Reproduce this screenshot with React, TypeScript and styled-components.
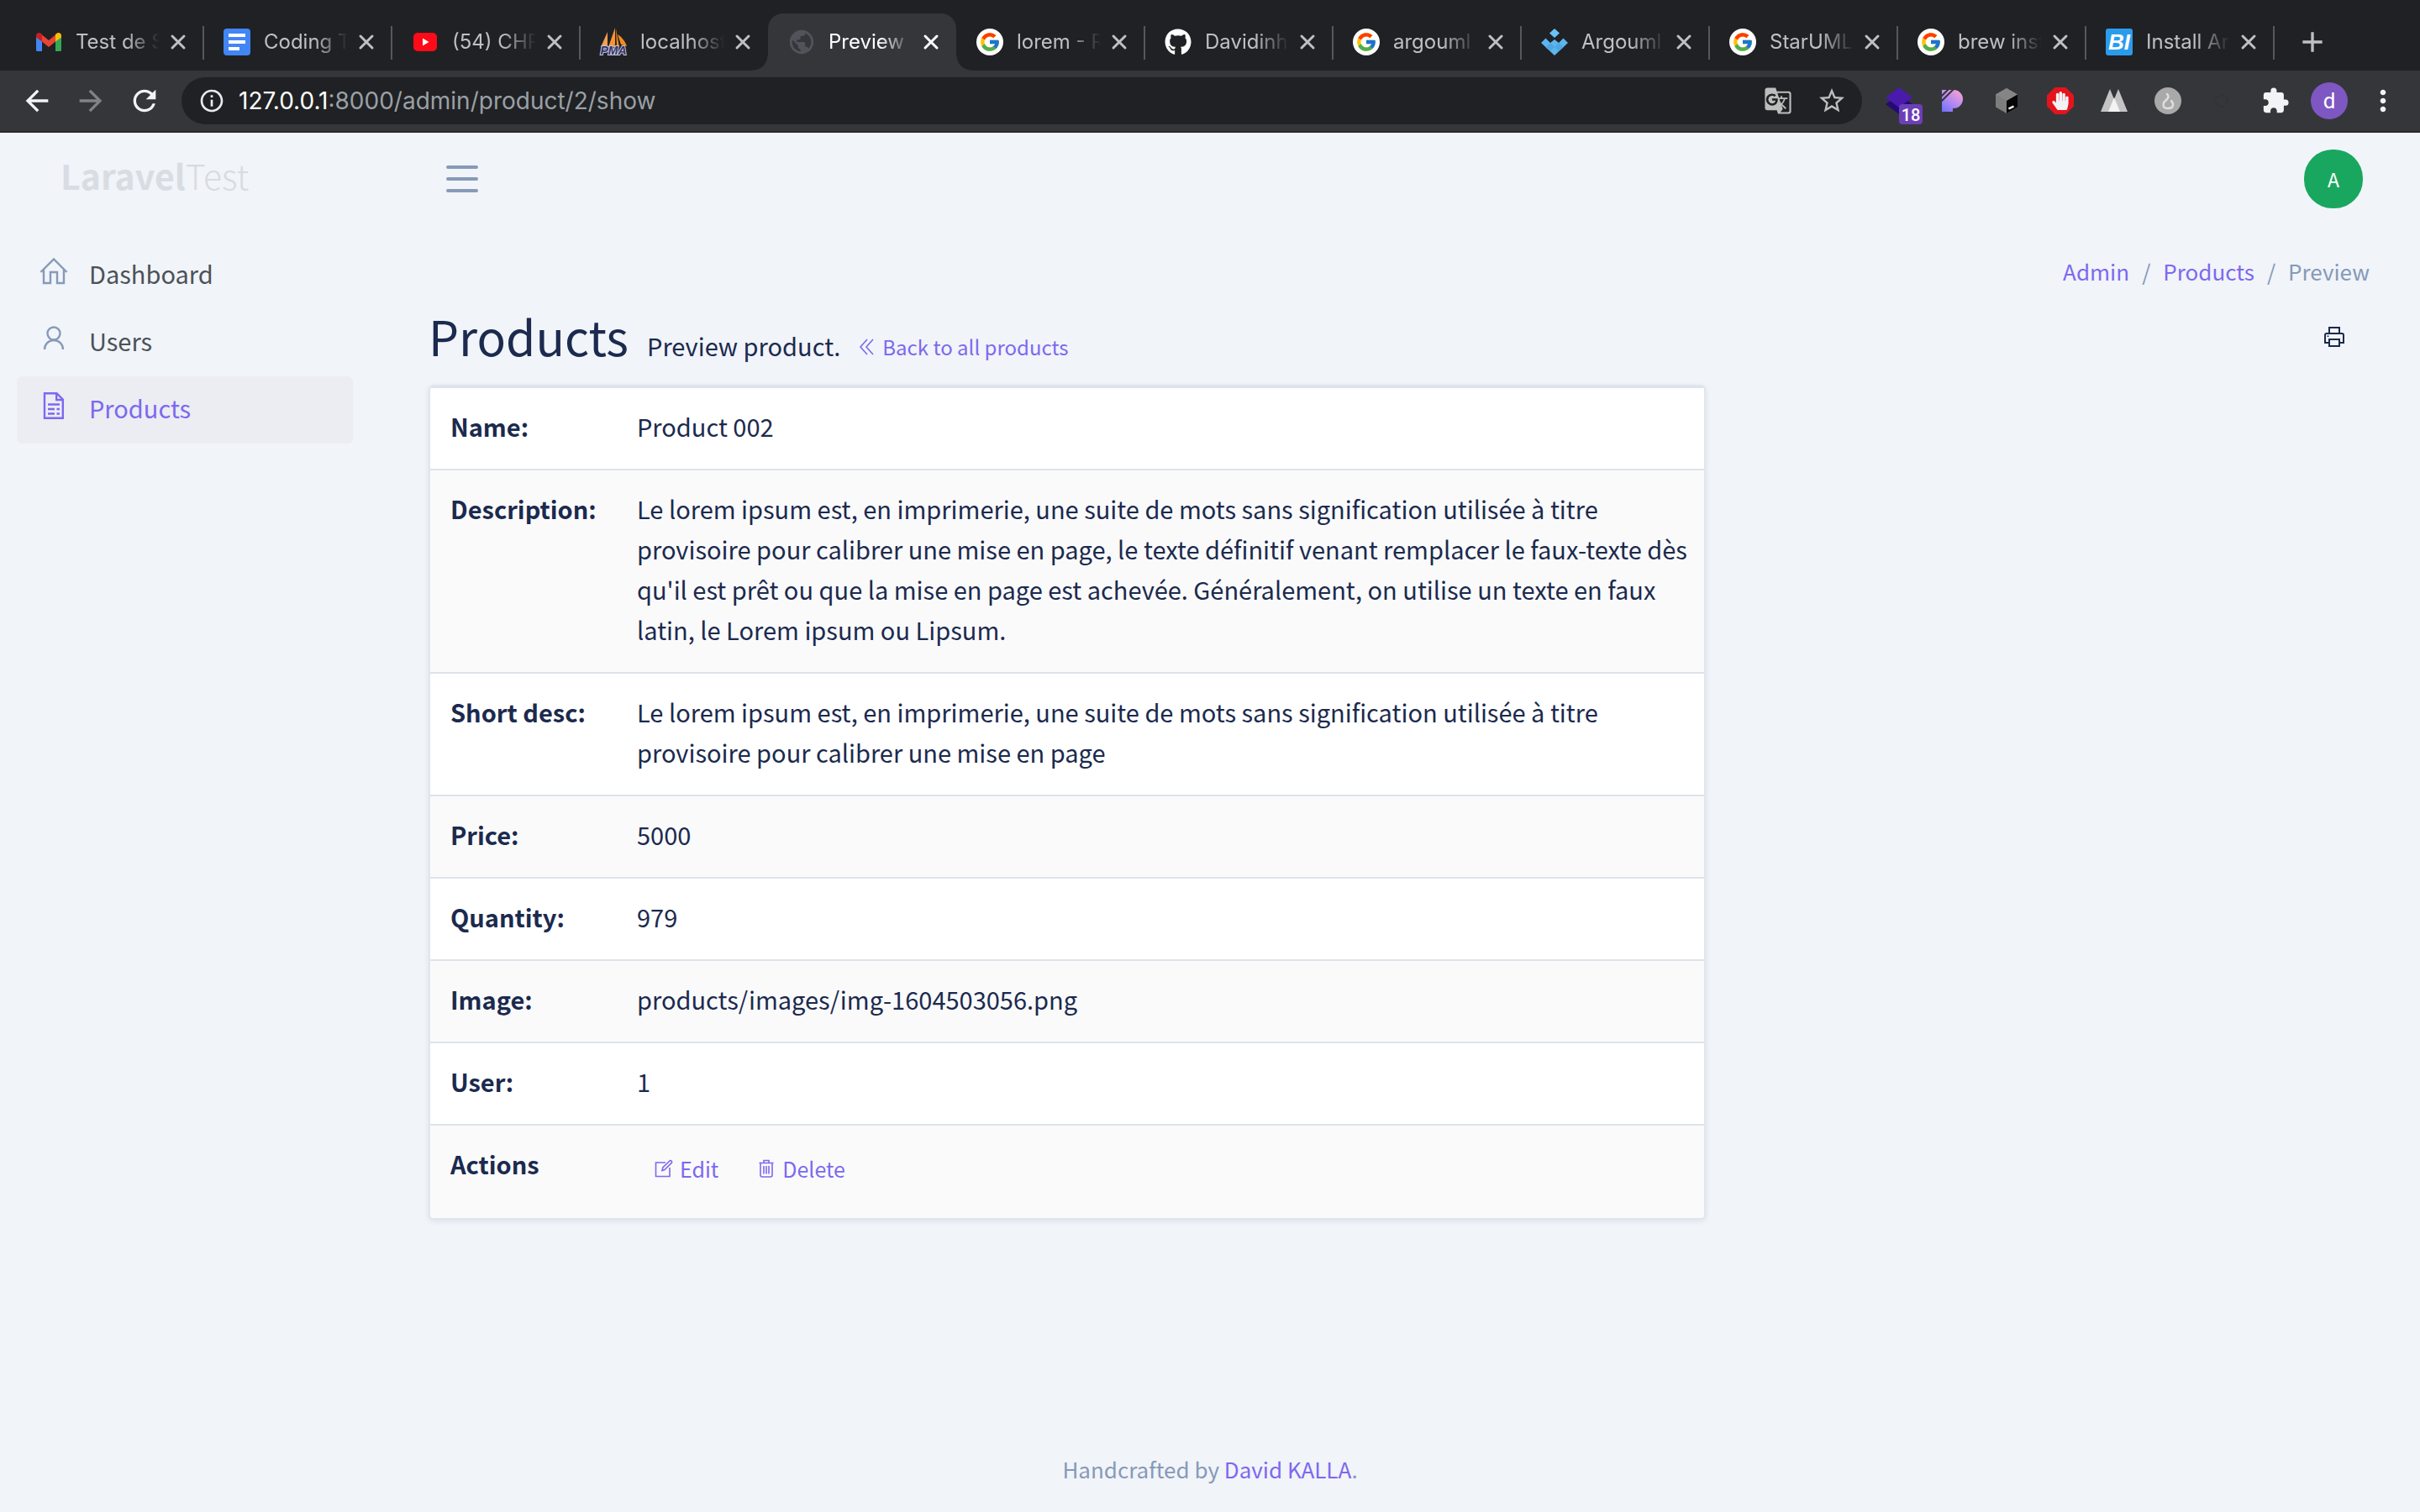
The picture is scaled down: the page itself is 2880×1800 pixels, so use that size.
import React from "react";
import styled, { createGlobalStyle } from "styled-components";
import {
  MdAdd,
  MdArrowBack,
  MdArrowForward,
  MdExtension,
  MdGTranslate,
  MdInfoOutline,
  MdMoreVert,
  MdPublic,
  MdRefresh,
  MdStarOutline,
} from "react-icons/md";
import { FcGoogle } from "react-icons/fc";
import { FaGithub, FaHandPaper } from "react-icons/fa";

const color = {
  page: "#f1f4f9",
  ink: "#1b2a4e",
  primary: "#7c69ef",
  muted: "#869ab8",
  line: "#dde2eb",
  strip: "#202124",
  toolbar: "#35363a",
};

const GlobalStyle = createGlobalStyle`
  *, *::before, *::after { box-sizing: border-box; }
  body {
    margin: 0;
    background: ${color.page};
    color: ${color.ink};
    font-family: "Noto Sans CJK SC", "Open Sans", sans-serif;
    font-size: 29px;
    line-height: 48px;
  }
  a { color: ${color.primary}; text-decoration: none; }
  button { border: 0; background: none; padding: 0; font: inherit; color: inherit; cursor: pointer; }
  svg { display: block; flex: none; }
`;

const Screen = styled.div`
  display: flex;
  flex-direction: column;
  min-height: 100vh;
`;

/* Browser chrome */

const Chrome = styled.header`
  font-family: Inter, "Liberation Sans", sans-serif;
  background: ${color.strip};
`;

const TabStrip = styled.nav`
  display: flex;
  padding: 16px 18px 0;
`;

const Tab = styled.div<{ $active?: boolean; $divided?: boolean }>`
  position: relative;
  display: flex;
  align-items: center;
  flex: 0 1 224px;
  min-width: 0;
  height: 68px;
  padding: 0 20px 0 23px;
  color: ${(p) => (p.$active ? "#ffffff" : "#bdc1c6")};
  background: ${(p) => (p.$active ? color.toolbar : "transparent")};
  border-radius: 18px 18px 0 0;

  &::before,
  &::after {
    content: "";
    position: absolute;
    display: ${(p) => (p.$active || p.$divided ? "block" : "none")};
  }
  &::before {
    display: ${(p) => (p.$active ? "block" : "none")};
    left: -18px;
    bottom: 0;
    width: 18px;
    height: 18px;
    background: radial-gradient(circle at 0 0, transparent 17px, ${color.toolbar} 18px);
  }
  &::after {
    right: ${(p) => (p.$active ? "-18px" : "-1px")};
    bottom: ${(p) => (p.$active ? "0" : "13px")};
    width: ${(p) => (p.$active ? "18px" : "2px")};
    height: ${(p) => (p.$active ? "18px" : "40px")};
    background: ${(p) =>
      p.$active ? `radial-gradient(circle at 100% 0, transparent 17px, ${color.toolbar} 18px)` : "#56585c"};
  }
`;

const TabIcon = styled.span`
  display: flex;
  align-items: center;
  justify-content: center;
  flex: none;
  width: 34px;
  height: 34px;
`;

const TabTitle = styled.span`
  flex: 1;
  min-width: 0;
  margin: 0 12px 0 15px;
  overflow: hidden;
  white-space: nowrap;
  font-size: 24px;
  line-height: 32px;
  mask-image: linear-gradient(90deg, #000 60px, transparent 100px);
`;

const NewTab = styled.button`
  display: flex;
  align-items: center;
  justify-content: center;
  width: 92px;
  height: 68px;
  color: #bdc1c6;
`;

const Toolbar = styled.div`
  display: flex;
  align-items: center;
  height: 74px;
  padding: 0 12px;
  background: ${color.toolbar};
  border-bottom: 2px solid #27282b;
`;

const ToolButton = styled.button<{ $dim?: boolean }>`
  position: relative;
  display: flex;
  align-items: center;
  justify-content: center;
  flex: none;
  width: 64px;
  height: 56px;
  color: ${(p) => (p.$dim ? "#808285" : "#f1f3f4")};
`;

const Omnibox = styled.div`
  display: flex;
  align-items: center;
  flex: 1;
  min-width: 0;
  height: 56px;
  margin: 0 12px;
  padding: 0 4px 0 20px;
  border-radius: 28px;
  background: ${color.strip};
  color: #e8eaed;
`;

const Address = styled.div`
  flex: 1;
  min-width: 0;
  padding-left: 16px;
  font-size: 28px;
  line-height: 40px;
  color: #9aa0a6;
  white-space: nowrap;
  outline: none;

  b {
    font-weight: 400;
    color: #ffffff;
  }
`;

const OmniButton = styled(ToolButton)`
  color: #bdbdbd;
`;

const GoogleDisc = styled.span`
  display: flex;
  align-items: center;
  justify-content: center;
  width: 32px;
  height: 32px;
  border-radius: 50%;
  background: #ffffff;
`;

const Badge = styled.span`
  position: absolute;
  left: 32px;
  top: 32px;
  width: 28px;
  height: 24px;
  border-radius: 4px;
  background: #6c3fb8;
  color: #ffffff;
  font-family: Roboto, sans-serif;
  font-size: 20px;
  font-weight: 500;
  line-height: 27px;
  text-align: center;
`;

const ProfileDisc = styled.span`
  width: 44px;
  height: 44px;
  border-radius: 50%;
  background: #7e57c2;
  color: #ffffff;
  font-family: Roboto, sans-serif;
  font-size: 26px;
  line-height: 44px;
`;

/* Admin application */

const AppHeader = styled.header`
  display: grid;
  grid-template-columns: 530px 1fr auto;
  align-items: center;
  height: 110px;
  padding-right: 68px;
`;

const Brand = styled.a`
  padding: 0 0 10px 72px;
  font-size: 41px;
  line-height: 60px;
  font-weight: 300;
  color: #d7dbe1;

  b {
    font-weight: 700;
    color: #d9dde3;
  }
`;

const MenuToggle = styled.button`
  justify-self: start;
  color: ${color.muted};
`;

const Avatar = styled.button`
  width: 70px;
  height: 70px;
  border-radius: 34px;
  background: #19a75f;
  color: #ffffff;
  font-size: 23px;
  line-height: 68px;
`;

const AppBody = styled.div`
  display: flex;
  flex: 1;
`;

const Sidebar = styled.nav`
  flex: none;
  width: 480px;
  padding: 20px 60px 0 20px;
`;

const MenuItem = styled.a<{ $active?: boolean }>`
  display: flex;
  align-items: flex-start;
  gap: 24px;
  padding: 13px 26px 19px;
  border-radius: 6px;
  background: ${(p) => (p.$active ? "#ebedf3" : "transparent")};
  color: ${(p) => (p.$active ? color.primary : "#4b5258")};

  svg {
    margin-top: 3px;
    color: ${(p) => (p.$active ? color.primary : color.muted)};
  }
`;

const Main = styled.main`
  flex: 1;
  min-width: 0;
  padding: 35px 60px 0 30px;
`;

const Breadcrumb = styled.ol`
  display: flex;
  justify-content: flex-end;
  margin: 0;
  padding: 0;
  list-style: none;
  font-size: 26px;
  line-height: 40px;
  color: ${color.muted};

  li + li::before {
    content: "/";
    padding: 0 15px;
  }
`;

const TitleRow = styled.div`
  display: flex;
  align-items: flex-end;
  justify-content: space-between;
  padding: 16px 0 19px;
`;

const Heading = styled.div`
  display: flex;
  align-items: baseline;
  gap: 22px;
`;

const Title = styled.h1`
  margin: 0;
  font-size: 57px;
  line-height: 80px;
  font-weight: 400;
`;

const IconLink = styled.a`
  display: inline-flex;
  align-items: center;
  gap: 10px;
  font-size: 24px;
  line-height: 36px;
`;

const PrintButton = styled.button`
  padding: 22px 30px 26px;
`;

const Columns = styled.div`
  display: grid;
  grid-template-columns: 2fr 1fr;
  gap: 30px;
`;

const Card = styled.section`
  overflow: hidden;
  border: 2px solid #e1e6ee;
  border-radius: 6px;
  background: #ffffff;
  box-shadow: 0 2px 6px rgba(20, 40, 80, 0.09);
`;

const Details = styled.table`
  width: 100%;
  border-collapse: separate;
  border-spacing: 0;

  th,
  td {
    padding: 21px 16px 27px 24px;
    border-top: 2px solid ${color.line};
    vertical-align: top;
    text-align: left;
  }
  th {
    width: 222px;
    font-weight: 700;
  }
  td {
    padding-right: 12px;
  }
  tr:nth-child(even) {
    background: #fafafb;
  }
`;

const Actions = styled.div`
  display: flex;
  gap: 4px;
`;

const ActionLink = styled(IconLink)`
  padding: 12px 21px 14px;
  gap: 8px;
  font-size: 25px;
`;

const Footer = styled.footer`
  padding: 24px 0 31px;
  text-align: center;
  font-size: 26px;
  line-height: 40px;
  color: ${color.muted};
`;

/* Icons */

const Google = () => (
  <GoogleDisc>
    <FcGoogle size={26} />
  </GoogleDisc>
);

const Gmail = () => (
  <svg width="32" height="32" viewBox="0 0 32 32">
    <path d="M1 8v17.500q0 1.500 1.500 1.500H8V14.500z" fill="#4285f4" />
    <path d="M31 8v17.500q0 1.500-1.500 1.500H24V14.500z" fill="#34a853" />
    <path d="M8 7.500v8L16 22l8-6.500v-8L16 14z" fill="#ea4335" />
    <path d="M1 8.500C1 5 4.500 4 7 6l1 1v8.500l-7-5z" fill="#c5221f" />
    <path d="M31 8.500C31 5 27.500 4 25 6l-1 1v8.500l7-5z" fill="#fbbc04" />
  </svg>
);

const Docs = () => (
  <svg width="32" height="32" viewBox="0 0 32 32">
    <rect width="32" height="32" rx="4" fill="#4285f4" />
    <path d="M6 6h20v4H6zM6 14h20v4H6zM6 22h13v4H6z" fill="#fff" />
  </svg>
);

const Youtube = () => (
  <svg width="30" height="24" viewBox="0 0 30 24">
    <rect x="1" y="1" width="28" height="22" rx="5" fill="#ff0a18" />
    <path d="M12 7.500v9l7.500-4.500z" fill="#fff" />
  </svg>
);

const PhpMyAdmin = () => (
  <svg width="34" height="34" viewBox="0 0 34 34">
    <path d="M10 5 2 23h8z" fill="#f6a04c" />
    <path d="M19 0 11 23h8z" fill="#f79433" />
    <path d="M20 1l4 22h-3zM22 8c5 3 9 8 11 14l-7-2z" fill="#f58a1f" />
    <text
      x="17"
      y="32"
      textAnchor="middle"
      fontFamily="Liberation Sans, sans-serif"
      fontWeight="700"
      fontStyle="italic"
      fontSize="14"
      fill="#34346c"
      stroke="#c9c9dc"
      strokeWidth="2"
      paintOrder="stroke"
    >
      PMA
    </text>
  </svg>
);

const Uml = () => (
  <svg width="32" height="32" viewBox="0 0 32 32">
    <path d="M16 0l6 5.500L16 11l-6-5.500z" fill="#6ac2fb" />
    <path d="M0 17l5.500-5.500L11 17l5-4 5 4 5.500-5.500L32 17 16 32z" fill="#5db5ef" />
    <path d="M5.500 22.500 11 17l5 5-5 5zM21 17l5.500 5.500L21 27l-5-5z" fill="#4fa5df" />
  </svg>
);

const BrewInstall = () => (
  <svg width="32" height="32" viewBox="0 0 32 32">
    <rect width="32" height="32" rx="3" fill="#2b9cec" />
    <text
      x="16"
      y="25"
      textAnchor="middle"
      fontFamily="Liberation Sans, sans-serif"
      fontWeight="700"
      fontStyle="italic"
      fontSize="26"
      fill="#fff"
    >
      BI
    </text>
  </svg>
);

const Layers = () => (
  <svg width="32" height="32" viewBox="0 0 32 32">
    <path d="M0 20l16-12 16 12-16 12z" fill="#240a76" />
    <path d="M16 0l16 12-16 12L0 12z" fill="#4a1aac" />
  </svg>
);

const Pitch = () => (
  <svg width="28" height="28" viewBox="0 0 28 28">
    <defs>
      <linearGradient id="pitch" x1="0.8" y1="0" x2="0.1" y2="1">
        <stop offset="0" stopColor="#f3a2d2" />
        <stop offset="0.5" stopColor="#b98af0" />
        <stop offset="1" stopColor="#6f72fb" />
      </linearGradient>
    </defs>
    <path d="M1 1h14a11 11 0 0 1 0 22h-1v4H1z" fill="url(#pitch)" />
    <path d="M0 9 9 0M0 15 15 0" stroke={color.toolbar} strokeWidth="2" />
  </svg>
);

const Cube = () => (
  <svg width="28" height="32" viewBox="0 0 28 32">
    <path d="M14 1l13 7.500v15L14 31 1 23.500v-15z" fill="#7d7d7d" />
    <path d="M1 8.500 14 1l13 7.500L14 16z" fill="#858585" />
    <path d="M27 8.500v15L14 31V16z" fill="#060606" />
    <path d="M16.500 25.500l6-3" stroke="#fff" strokeWidth="2.500" />
  </svg>
);

const BlockerFrame = styled.span`
  display: flex;
  align-items: center;
  justify-content: center;
  width: 32px;
  height: 32px;
  background: #e5141c;
  clip-path: polygon(30% 0, 70% 0, 100% 30%, 100% 70%, 70% 100%, 30% 100%, 0 70%, 0 30%);
`;

const Peaks = () => (
  <svg width="34" height="28" viewBox="0 0 34 28">
    <path d="M12 0 1 27h22zM22 0 11 27h22z" fill="#c4c4c4" />
    <path d="M17 10 10 27h14z" fill="#f3f3f3" />
  </svg>
);

const Drop = () => (
  <svg width="32" height="32" viewBox="0 0 32 32">
    <circle cx="16" cy="16" r="16" fill="#a9a9a9" />
    <path
      d="M15 8q3 3 0 6l-4 4q-2 7 5 7 7 0 6-6l-2-3"
      fill="none"
      stroke="#dedede"
      strokeWidth="2.500"
      strokeLinecap="round"
    />
  </svg>
);

const Ghost = () => (
  <svg width="16" height="16" viewBox="0 0 16 16">
    <circle cx="8" cy="8" r="7" fill="none" stroke="#2d3338" strokeWidth="2" strokeDasharray="5 3" />
  </svg>
);

const Burger = () => (
  <svg width="40" height="36" viewBox="0 0 40 36">
    <path d="M3 4h34M3 18h34M3 32h34" stroke="currentColor" strokeWidth="4" strokeLinecap="round" />
  </svg>
);

const Home = () => (
  <svg width="36" height="36" viewBox="0 0 36 36" fill="none" stroke="currentColor" strokeWidth="2.400">
    <path d="M2.500 20 18 4.500 33.500 20" />
    <path d="M6 17v16h8V20h8v13h8V17" />
  </svg>
);

const User = () => (
  <svg width="36" height="36" viewBox="0 0 36 36" fill="none" stroke="currentColor" strokeWidth="2.400">
    <circle cx="18" cy="13" r="7.500" />
    <path d="M7 32a11 11 0 0 1 22 0" />
  </svg>
);

const FileIcon = () => (
  <svg width="36" height="36" viewBox="0 0 36 36" fill="none" stroke="currentColor" strokeWidth="2.400">
    <path d="M7 4.200h14.500L28.800 11.500v22.300H7z" />
    <path d="M21.200 4.200v7.800h7.600" />
    <path d="M11 17.500h14M11 23h8M21.500 23H25M11 28.500h8M21.500 28.500H25" />
  </svg>
);

const Chevrons = () => (
  <svg width="18" height="22" viewBox="0 0 18 22" fill="none" stroke="currentColor" strokeWidth="1.600">
    <path d="M10 2 2 11l8 9M17 2 9 11l8 9" />
  </svg>
);

const Edit = () => (
  <svg width="22" height="22" viewBox="0 0 22 22" fill="none" stroke="currentColor" strokeWidth="1.600">
    <path d="M13 4H1.500v16.500H18V10" />
    <path d="M9 13.500l.8-3.500L18.500 1.500q2.500.2 2 2.500L12 12.500z" />
  </svg>
);

const Trash = () => (
  <svg width="22" height="22" viewBox="0 0 22 22" fill="none" stroke="currentColor" strokeWidth="1.600">
    <path d="M2.500 4.500h17M8 4V1.500h6V4M4 5v14q0 2 2 2h10q2 0 2-2V5" />
    <path d="M8 8v9.500M11 8v9.500M14 8v9.500" />
  </svg>
);

const Printer = () => (
  <svg width="24" height="24" viewBox="0 0 24 24" fill="none" stroke="currentColor" strokeWidth="2">
    <path d="M6 8V1h12v7" />
    <path d="M6 19H1v-9q0-2 2-2h18q2 0 2 2v9h-5" />
    <path d="M6 15h12v8H6z" />
    <path d="M3.500 11.200h2" strokeWidth="1.500" />
  </svg>
);

/* Data */

const tabs: { title: string; icon: React.ReactNode; active?: boolean }[] = [
  { title: "Test de Se", icon: <Gmail /> },
  { title: "Coding Te", icon: <Docs /> },
  { title: "(54) CHR", icon: <Youtube /> },
  { title: "localhost", icon: <PhpMyAdmin /> },
  { title: "Preview", icon: <MdPublic size={34} color="#50545a" />, active: true },
  { title: "lorem - R", icon: <Google /> },
  { title: "Davidinh", icon: <FaGithub size={32} color="#fff" /> },
  { title: "argouml", icon: <Google /> },
  { title: "Argouml", icon: <Uml /> },
  { title: "StarUML", icon: <Google /> },
  { title: "brew inst", icon: <Google /> },
  { title: "Install Ar", icon: <BrewInstall /> },
];

const extensions: { label: string; icon: React.ReactNode }[] = [
  { label: "Layers", icon: <><Layers /><Badge>18</Badge></> },
  { label: "Pitch", icon: <Pitch /> },
  { label: "Cube", icon: <Cube /> },
  { label: "Ad blocker", icon: <BlockerFrame><FaHandPaper size={22} /></BlockerFrame> },
  { label: "Peaks", icon: <Peaks /> },
  { label: "Drop", icon: <Drop /> },
  { label: "Inactive extension", icon: <Ghost /> },
  { label: "Extensions", icon: <MdExtension size={34} /> },
  { label: "Profile", icon: <ProfileDisc>d</ProfileDisc> },
  { label: "More", icon: <MdMoreVert size={40} /> },
];

const menu = [
  { label: "Dashboard", icon: <Home /> },
  { label: "Users", icon: <User /> },
  { label: "Products", icon: <FileIcon />, active: true },
];

const rows: [string, string][] = [
  ["Name:", "Product 002"],
  [
    "Description:",
    "Le lorem ipsum est, en imprimerie, une suite de mots sans signification utilisée à titre provisoire pour calibrer une mise en page, le texte définitif venant remplacer le faux-texte dès qu'il est prêt ou que la mise en page est achevée. Généralement, on utilise un texte en faux latin, le Lorem ipsum ou Lipsum.",
  ],
  [
    "Short desc:",
    "Le lorem ipsum est, en imprimerie, une suite de mots sans signification utilisée à titre provisoire pour calibrer une mise en page",
  ],
  ["Price:", "5000"],
  ["Quantity:", "979"],
  ["Image:", "products/images/img-1604503056.png"],
  ["User:", "1"],
];

export default function App() {
  return (
    <Screen>
      <GlobalStyle />
      <Chrome>
        <TabStrip aria-label="Tabs">
          {tabs.map((tab, i) => (
            <Tab key={i} $active={tab.active} $divided={!tabs[i + 1]?.active}>
              <TabIcon>{tab.icon}</TabIcon>
              <TabTitle>{tab.title}</TabTitle>
              <button aria-label={`Close ${tab.title}`}>
                <svg width="20" height="20" viewBox="0 0 20 20">
                  <path
                    d="M3 3l14 14M17 3 3 17"
                    stroke="currentColor"
                    strokeWidth="3"
                    strokeLinecap="round"
                  />
                </svg>
              </button>
            </Tab>
          ))}
          <NewTab aria-label="New tab">
            <MdAdd size={40} />
          </NewTab>
        </TabStrip>
        <Toolbar>
          <ToolButton aria-label="Back">
            <MdArrowBack size={40} />
          </ToolButton>
          <ToolButton aria-label="Forward" $dim>
            <MdArrowForward size={40} />
          </ToolButton>
          <ToolButton aria-label="Reload">
            <MdRefresh size={40} />
          </ToolButton>
          <Omnibox>
            <MdInfoOutline size={32} />
            <Address role="textbox" aria-label="Address" tabIndex={0}>
              <b>127.0.0.1</b>:8000/admin/product/2/show
            </Address>
            <OmniButton aria-label="Translate">
              <MdGTranslate size={34} />
            </OmniButton>
            <OmniButton aria-label="Bookmark">
              <MdStarOutline size={36} />
            </OmniButton>
          </Omnibox>
          {extensions.map((item) => (
            <ToolButton key={item.label} aria-label={item.label}>
              {item.icon}
            </ToolButton>
          ))}
        </Toolbar>
      </Chrome>

      <AppHeader>
        <Brand href="#">
          <b>Laravel</b>Test
        </Brand>
        <MenuToggle aria-label="Toggle menu">
          <Burger />
        </MenuToggle>
        <Avatar aria-label="Account">A</Avatar>
      </AppHeader>

      <AppBody>
        <Sidebar aria-label="Main">
          {menu.map((item) => (
            <MenuItem key={item.label} href="#" $active={item.active}>
              {item.icon}
              {item.label}
            </MenuItem>
          ))}
        </Sidebar>
        <Main>
          <Breadcrumb>
            <li>
              <a href="#">Admin</a>
            </li>
            <li>
              <a href="#">Products</a>
            </li>
            <li>Preview</li>
          </Breadcrumb>
          <TitleRow>
            <Heading>
              <Title>Products</Title>
              <span>Preview product.</span>
              <IconLink href="#">
                <Chevrons />
                Back to all products
              </IconLink>
            </Heading>
            <PrintButton aria-label="Print">
              <Printer />
            </PrintButton>
          </TitleRow>
          <Columns>
            <Card>
              <Details>
                <tbody>
                  {rows.map(([label, value]) => (
                    <tr key={label}>
                      <th scope="row">{label}</th>
                      <td>{value}</td>
                    </tr>
                  ))}
                  <tr>
                    <th scope="row">Actions</th>
                    <td>
                      <Actions>
                        <ActionLink href="#">
                          <Edit />
                          Edit
                        </ActionLink>
                        <ActionLink href="#">
                          <Trash />
                          Delete
                        </ActionLink>
                      </Actions>
                    </td>
                  </tr>
                </tbody>
              </Details>
            </Card>
          </Columns>
        </Main>
      </AppBody>
      <Footer>
        Handcrafted by <a href="#">David KALLA</a>.
      </Footer>
    </Screen>
  );
}
